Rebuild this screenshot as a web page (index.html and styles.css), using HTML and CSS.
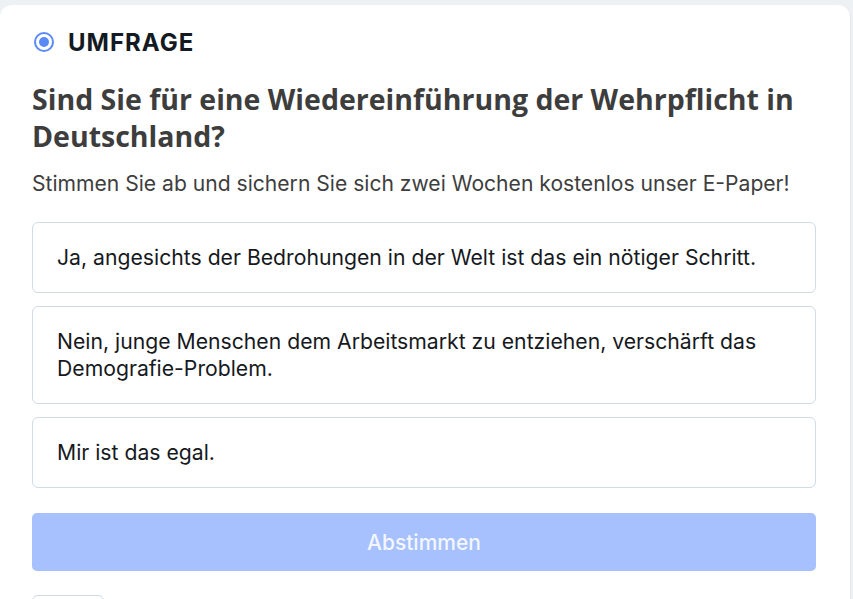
FILE: index.html
```html
<!DOCTYPE html>
<html lang="de">
<head>
<meta charset="utf-8">
<title>Umfrage</title>
<link rel="stylesheet" href="styles.css">
</head>
<body>
<div class="card">
  <div class="label">
    <svg class="radio" width="20" height="20" viewBox="0 0 20 20" aria-hidden="true">
      <circle cx="10" cy="10" r="9" fill="none" stroke="#5b8af7" stroke-width="2"/>
      <circle cx="10" cy="10" r="5" fill="#5b8af7"/>
    </svg>
    <span class="label-text">UMFRAGE</span>
  </div>
  <h1 class="question">Sind Sie für eine Wiedereinführung der Wehrpflicht in Deutschland?</h1>
  <p class="sub">Stimmen Sie ab und sichern Sie sich zwei Wochen kostenlos unser E-Paper!</p>
  <div class="options">
    <div class="option">Ja, angesichts der Bedrohungen in der Welt ist das ein nötiger Schritt.</div>
    <div class="option">Nein, junge Menschen dem Arbeitsmarkt zu entziehen, verschärft das Demografie-Problem.</div>
    <div class="option">Mir ist das egal.</div>
  </div>
  <button class="vote">Abstimmen</button>
  <div class="more"></div>
</div>
</body>
</html>
```

FILE: styles.css
```css
html, body {
  margin: 0;
  padding: 0;
  background: #edf1f4;
  overflow: hidden;
  height: 599px;
}
.card {
  margin-top: 5px;
  width: 851px;
  height: 620px;
  background: #ffffff;
  border-right: 1px solid #e4e7ea;
  border-radius: 12px 12px 0 0;
  padding: 22px 34px 0 32px;
  box-sizing: border-box;
  font-family: Inter, "Noto Sans", sans-serif;
}
.label {
  display: flex;
  align-items: center;
  gap: 14px;
  margin-left: 2px;
  height: 30px;
}
.radio {
  display: block;
}
.label-text {
  font-size: 24px;
  font-weight: 700;
  color: #141a22;
  letter-spacing: 1px;
}
.question {
  margin: 24px 0 0 0;
  font-family: "Open Sans", Roboto, sans-serif;
  font-size: 28.5px;
  font-weight: 700;
  line-height: 37px;
  color: #3d3d3d;
}
.sub {
  margin: 16px 0 0 0;
  font-size: 21.1px;
  line-height: 26px;
  color: #3e3e3e;
}
.options {
  margin-top: 25px;
  display: flex;
  flex-direction: column;
  gap: 13px;
}
.option {
  border: 1px solid #cfdbe5;
  border-radius: 6px;
  padding: 21px 24px;
  font-size: 21.2px;
  line-height: 27px;
  color: #16191d;
}
.vote {
  display: block;
  width: 100%;
  margin-top: 25px;
  height: 58px;
  border: none;
  border-radius: 5px;
  background: #a6c1fd;
  color: #f3f6ff;
  font-family: Inter, "Noto Sans", sans-serif;
  font-size: 21px;
  font-weight: 500;
}
.more {
  margin-top: 24px;
  width: 70px;
  height: 30px;
  border: 1px solid #cfdbe5;
  border-radius: 6px;
}
```
